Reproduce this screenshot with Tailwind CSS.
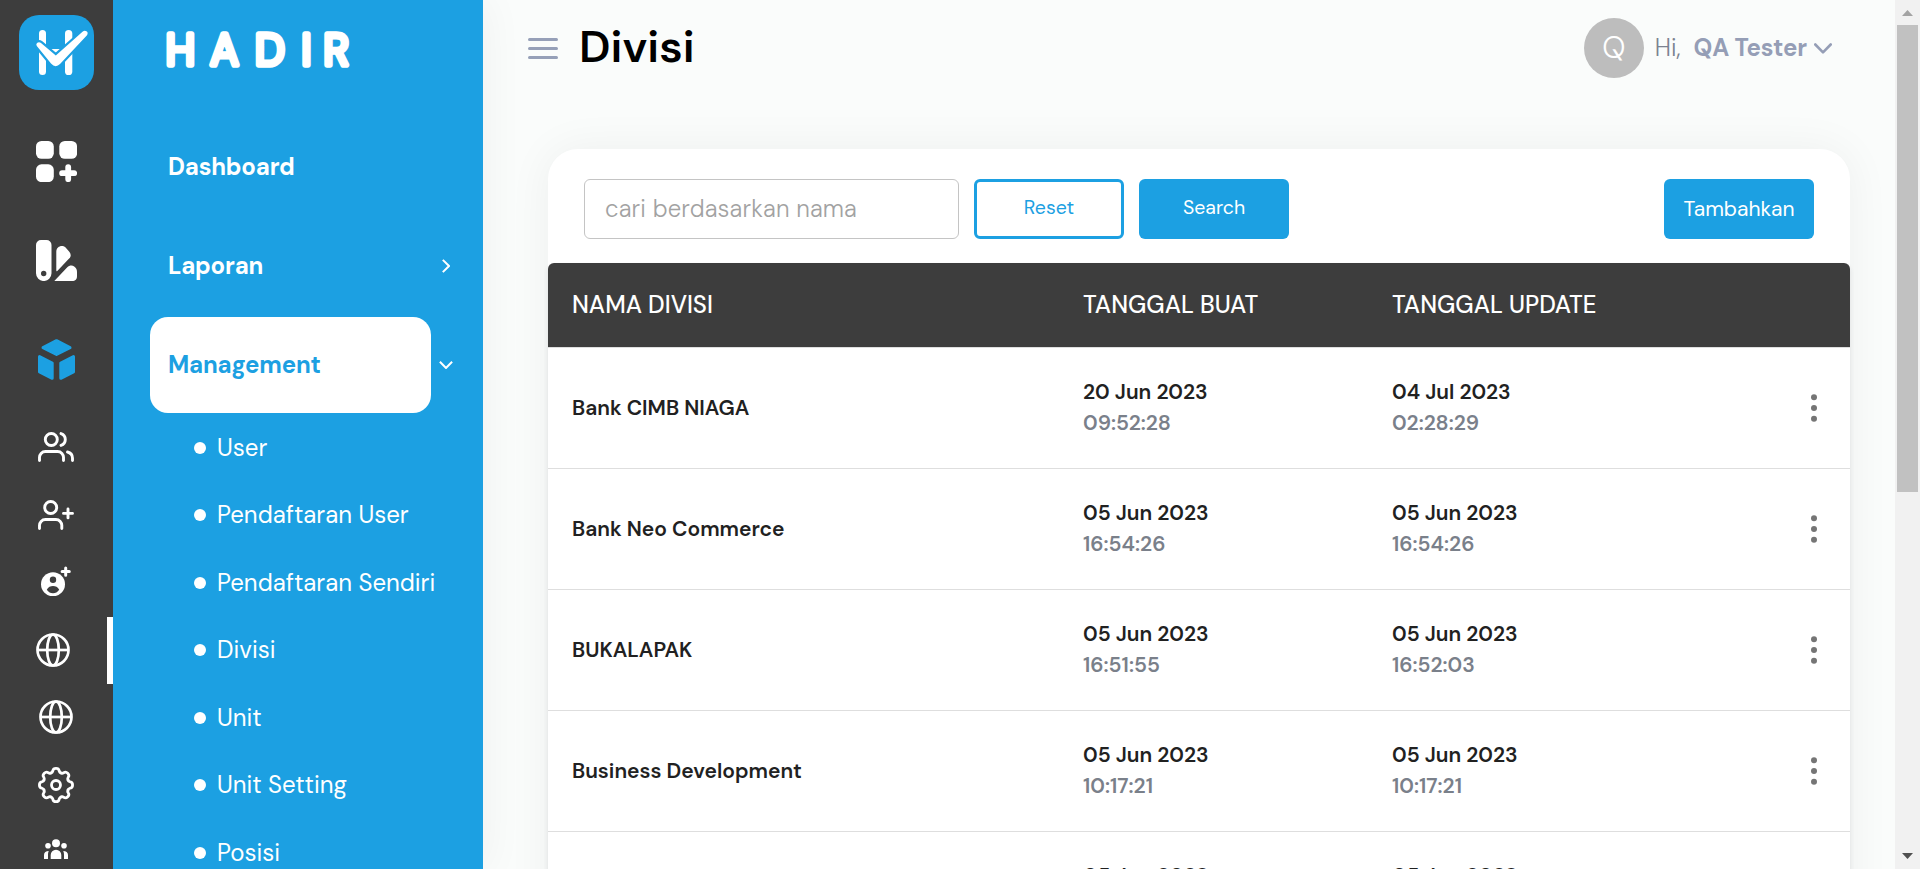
<!DOCTYPE html>
<html lang="id">
<head>
<meta charset="utf-8">
<title>Divisi</title>
<script src="https://cdn.jsdelivr.net/npm/@tailwindcss/browser@4"></script>
</head>
<body class="flex h-[869px] w-[1920px] overflow-hidden bg-[#fafcfb] font-['DM_Sans','Inter',sans-serif] text-2xl text-[#212121]">

<!-- Icon rail -->
<nav class="relative z-20 flex w-[113px] shrink-0 flex-col items-center bg-[#3d3d3d] pt-[15px] text-white">
  <svg class="size-[75px] shrink-0" viewBox="0 0 75 75">
    <rect width="75" height="75" rx="20" fill="#1ca0e2"/>
    <g fill="#fff"><rect x="20" y="15" width="7" height="45" rx="3.5"/><rect x="46" y="15" width="7.3" height="45" rx="3.6"/><rect x="25" y="34" width="23" height="6"/></g>
    <path d="M17.8 31L32 48.5Q36.5 53.5 41 49L68 20.3Q69.5 17.5 67.5 16.3Q65.5 15 63.5 16.8L36.8 40.5L22 28Q20 26.5 18 28Q16.7 29.5 17.8 31Z" fill="#fff" stroke="#1ca0e2" stroke-width="4.4" paint-order="stroke"/>
  </svg>
  <div class="mt-[22px] flex flex-col items-center">
    <div class="flex h-[99px] items-center">
      <svg class="size-[41px]" viewBox="0 0 41 41" fill="currentColor"><rect width="17.8" height="17.8" rx="5.5"/><rect x="23.3" width="17.8" height="17.8" rx="5.5"/><rect y="23.3" width="17.8" height="17.8" rx="5.5"/><path d="M32.2 26.1v12.1M26.1 32.2h12.1" stroke="currentColor" stroke-width="5.8" stroke-linecap="round"/></svg>
    </div>
    <div class="flex h-[99px] items-center">
      <svg class="size-[41px]" viewBox="0 0 41 41" fill="currentColor"><path fill-rule="evenodd" d="M5 0h5.5a5 5 0 0 1 5 5v28.3a7.75 7.75 0 0 1-15.5 0V5a5 5 0 0 1 5-5zM7.7 30.8a2.7 2.7 0 1 0 0 5.4 2.7 2.7 0 0 0 0-5.4z"/><path d="M20.3 11.8C20.3 6 27 4.3 30 8l3.3 3.7c2 2.4 1.8 5-.2 6.9L21.3 31q-1 .6-1-.5z"/><path d="M18.3 41L31.3 27.2c1.8-1.8 4.8-2.2 6.9-.8C40.4 27.8 41 30 41 32v4c0 3.5-1.5 5-5 5z"/></svg>
    </div>
    <div class="flex h-[99px] items-center">
      <svg class="h-[41px] w-[37px] text-[#1ca0e2]" viewBox="0 0 37 41" fill="currentColor" stroke="currentColor" stroke-width="3" stroke-linejoin="round"><path d="M18.500 1.700L32 8.700 18.500 15.500 5 8.700zM1.500 17.500l12.700 6.500v15.300L1.500 33zM35.500 17.500L22.800 24v15.300L35.500 33z"/></svg>
    </div>
  </div>
  <div class="flex w-full flex-col items-center pt-[5px]">
    <div class="flex h-[67.5px] shrink-0 items-center pr-0.5 pb-0.5">
      <svg class="h-[30px] w-9" viewBox="0 0 36 30" fill="none" stroke="currentColor" stroke-width="2.900" stroke-linecap="round"><circle cx="13.300" cy="7.500" r="6"/><path d="M1.500 28.500V26a6 6 0 0 1 6-6.500h12a6 6 0 0 1 6 6.500v2.500M23 1.600a6.200 6.200 0 0 1 0 11.800M29.500 20a6.500 6.500 0 0 1 5 6.200v2.300"/></svg>
    </div>
    <div class="flex h-[67.5px] shrink-0 items-center pr-0.5">
      <svg class="h-[30px] w-9" viewBox="0 0 36 30" fill="none" stroke="currentColor" stroke-width="2.900" stroke-linecap="round"><circle cx="12.700" cy="7.500" r="6"/><path d="M1.500 28.500V26a6 6 0 0 1 6-6.500h10.300a6 6 0 0 1 6 6.500v2.500M30 8.900v9M25.500 13.400h9"/></svg>
    </div>
    <div class="flex h-[67.5px] shrink-0 items-center pr-0.5 pb-1">
      <svg class="size-[30px]" viewBox="0 0 30 30"><circle cx="12" cy="18.300" r="12" fill="currentColor"/><circle cx="12" cy="13.700" r="3.200" fill="#3d3d3d"/><path d="M5.800 23.700C7.200 21 9.500 20 12 20s4.800 1 6.200 3.700C16.500 26.200 14.500 27.200 12 27.200s-4.500-1-6.200-3.500z" fill="#3d3d3d"/><path d="M24.700 2v7.200M21.100 5.600h7.200" stroke="currentColor" stroke-width="3" stroke-linecap="round"/></svg>
    </div>
    <div class="flex h-[67.5px] w-full shrink-0 items-center justify-center border-r-[6px] border-white pr-0.5">
      <svg class="size-[34px]" viewBox="0 0 34 34" fill="none" stroke="currentColor" stroke-width="2.700"><circle cx="17" cy="17" r="15.500"/><ellipse cx="17" cy="17" rx="5.800" ry="15.500"/><path d="M2 17h30"/></svg>
    </div>
    <div class="flex h-[67.5px] shrink-0 items-center pr-0.5 pb-px">
      <svg class="size-[34px]" viewBox="0 0 34 34" fill="none" stroke="currentColor" stroke-width="2.700"><circle cx="17" cy="17" r="15.500"/><ellipse cx="17" cy="17" rx="5.800" ry="15.500"/><path d="M2 17h30"/></svg>
    </div>
    <div class="flex h-[67.5px] shrink-0 items-center pr-0.5">
      <svg class="size-9" viewBox="-18 -18 36 36" fill="none" stroke="currentColor" stroke-width="2.800" stroke-linecap="round">
        <defs><path id="tooth" d="M-5-12C-3.200-12.700-3.400-13.600-3.100-14.400C-2.600-17.300 2.600-17.300 3.100-14.400C3.400-13.600 3.200-12.700 5-12"/></defs>
        <circle r="4.500"/><use href="#tooth"/><use href="#tooth" transform="rotate(45)"/><use href="#tooth" transform="rotate(90)"/><use href="#tooth" transform="rotate(135)"/><use href="#tooth" transform="rotate(180)"/><use href="#tooth" transform="rotate(225)"/><use href="#tooth" transform="rotate(270)"/><use href="#tooth" transform="rotate(315)"/>
      </svg>
    </div>
    <div class="flex h-[67.5px] shrink-0 items-center pr-0.5 pb-[7px]">
      <svg class="h-5 w-6" viewBox="0 0 24 20" fill="currentColor"><circle cx="12" cy="4.300" r="4"/><circle cx="4" cy="6.700" r="2.800"/><circle cx="20" cy="6.700" r="2.800"/><path d="M6.700 20v-4a5.300 5.300 0 0 1 10.600 0v4zM0 20v-4c0-2.600 2-4 4.800-4-.700 1.200-.8 2.500-.8 4v4zM24 20v-4c0-2.600-2-4-4.800-4 .7 1.200.8 2.500.8 4v4z"/></svg>
    </div>
  </div>
</nav>

<!-- Menu panel -->
<aside class="relative z-10 flex w-[370px] shrink-0 flex-col bg-[#1ca0e2] text-white shadow-[0_0_42px_rgba(0,0,0,0.055)]">
  <svg class="h-[119px] w-full shrink-0" viewBox="113 0 370 119">
    <text transform="scale(.96 1)" y="64.800" x="172.600 219 265.600 314.200 337" font-family="DM Sans, Inter, sans-serif" font-size="45" font-weight="300" fill="#fff" stroke="#fff" stroke-width="5.600" stroke-linejoin="round">HADIR</text>
  </svg>
  <div class="flex flex-col gap-[3px] pl-[37px] font-bold">
    <a class="flex h-24 w-[281px] items-center pl-[18px] tracking-[-0.2px]">Dashboard</a>
    <div class="flex items-center">
      <a class="flex h-24 w-[281px] items-center pl-[18px] tracking-[-0.2px]">Laporan</a>
      <svg class="ml-[11px] h-[14px] w-2" viewBox="0 0 8 14" fill="none" stroke="currentColor" stroke-width="2"><path d="M.8.900L7 7 .8 13.100"/></svg>
    </div>
    <div class="flex items-center">
      <a class="flex h-24 w-[281px] items-center rounded-[18px] bg-white pl-[18px] tracking-[-0.2px] text-[#1ca0e2]">Management</a>
      <svg class="ml-2 h-2 w-[14px]" viewBox="0 0 14 8" fill="none" stroke="currentColor" stroke-width="2"><path d="M.9.800L7 7 13.100.8"/></svg>
    </div>
  </div>
  <ul class="flex flex-col pt-[1px] pl-[81px]">
    <li class="flex h-[67.5px] shrink-0 items-center gap-[11px]"><span class="size-3 rounded-full bg-white"></span><span class="pt-px">User</span></li>
    <li class="flex h-[67.5px] shrink-0 items-center gap-[11px]"><span class="size-3 rounded-full bg-white"></span><span>Pendaftaran User</span></li>
    <li class="flex h-[67.5px] shrink-0 items-center gap-[11px]"><span class="size-3 rounded-full bg-white"></span><span class="pt-px">Pendaftaran Sendiri</span></li>
    <li class="flex h-[67.5px] shrink-0 items-center gap-[11px]"><span class="size-3 rounded-full bg-white"></span><span>Divisi</span></li>
    <li class="flex h-[67.5px] shrink-0 items-center gap-[11px]"><span class="size-3 rounded-full bg-white"></span><span class="pt-px">Unit</span></li>
    <li class="flex h-[67.5px] shrink-0 items-center gap-[11px]"><span class="size-3 rounded-full bg-white"></span><span>Unit Setting</span></li>
    <li class="flex h-[67.5px] shrink-0 items-center gap-[11px]"><span class="size-3 rounded-full bg-white"></span><span class="pt-px">Posisi</span></li>
  </ul>
</aside>

<!-- Content -->
<main class="flex min-w-0 flex-1 flex-col overflow-hidden">
  <header class="flex h-24 shrink-0 items-center pr-[63px] pl-[45px]">
    <div class="flex h-[21px] w-[30px] flex-col justify-between"><span class="h-[3px] rounded-xs bg-[#96a0b8]"></span><span class="h-[3px] rounded-xs bg-[#96a0b8]"></span><span class="h-[3px] rounded-xs bg-[#96a0b8]"></span></div>
    <h1 class="ml-[21px] pb-[3px] text-[45px] leading-none font-semibold text-black">Divisi</h1>
    <div class="ml-auto flex items-center text-[#959eb6]">
      <div class="flex size-[60px] items-center justify-center rounded-full bg-[#bdbdbd] text-[30px] font-light text-white">Q</div>
      <span class="ml-[11px] font-light text-[#7b8290]">Hi,</span>
      <span class="ml-[13px] font-bold tracking-[-0.15px]">QA Tester</span>
      <svg class="ml-[7px] h-[11px] w-[18px]" viewBox="0 0 18 11" fill="none" stroke="currentColor" stroke-width="2.600" stroke-linecap="round" stroke-linejoin="round"><path d="M1.300 1.500L9 9.300l7.700-7.800"/></svg>
    </div>
  </header>

  <section class="mt-[53px] mr-[45px] ml-[65px] flex flex-1 flex-col rounded-t-[30px] bg-white shadow-[0_0_45px_rgba(0,0,0,0.055)]">
    <div class="flex h-[114px] shrink-0 items-start pt-[30px] pr-9 pl-9">
      <div class="flex h-[60px] w-[375px] items-center rounded-md border border-[#c4c4c4] pl-5 font-light tracking-[0.14px] text-[#a2a2a2]">cari berdasarkan nama</div>
      <button class="ml-[15px] h-[60px] w-[150px] rounded-md border-3 border-[#1ca0e2] pb-[3px] text-[19.5px] text-[#1ca0e2]">Reset</button>
      <button class="ml-[15px] h-[60px] w-[150px] rounded-md bg-[#1ca0e2] pb-[3px] text-[19.5px] text-white">Search</button>
      <button class="ml-auto h-[60px] w-[150px] rounded-md bg-[#1ca0e2] text-[21px] text-white">Tambahkan</button>
    </div>

    <div class="flex flex-1 flex-col rounded-t-md bg-white shadow-[0_3px_5px_rgba(40,40,60,0.11)]">
      <div class="grid h-[84px] shrink-0 grid-cols-[511px_309px_1fr] items-center rounded-t-md bg-[#3d3d3d] pl-6 font-medium text-white"><span>NAMA DIVISI</span><span>TANGGAL BUAT</span><span>TANGGAL UPDATE</span></div>
      <div id="rows" class="text-[21px] font-semibold"></div>
    </div>
  </section>
</main>

<!-- Scrollbar -->
<div class="flex w-[25px] shrink-0 flex-col items-center bg-[#f1f1f1]">
  <svg class="h-[25px] w-[11px]" viewBox="0 0 11 25" fill="#a3a3a3"><path d="M5.500 10l5.500 6H0z"/></svg>
  <div class="h-[467px] w-[21px] bg-[#c1c1c1]"></div>
  <svg class="mt-auto h-[25px] w-[11px]" viewBox="0 0 11 25" fill="#505050"><path d="M5.500 15L0 9h11z"/></svg>
</div>

<script>
const rows = [
  ['Bank CIMB NIAGA', '20 Jun 2023', '09:52:28', '04 Jul 2023', '02:28:29'],
  ['Bank Neo Commerce', '05 Jun 2023', '16:54:26', '05 Jun 2023', '16:54:26'],
  ['BUKALAPAK', '05 Jun 2023', '16:51:55', '05 Jun 2023', '16:52:03'],
  ['Business Development', '05 Jun 2023', '10:17:21', '05 Jun 2023', '10:17:21'],
  ['', '05 Jun 2023', '', '05 Jun 2023', ''],
];
const cell = (d, t) => `<div class="leading-[31px]"><p>${d}</p><p class="h-[31px] text-[#7a808a]">${t}</p></div>`;
document.getElementById('rows').innerHTML = rows.map(([n, d1, t1, d2, t2]) => `
  <div class="grid h-[121px] grid-cols-[511px_309px_1fr_6px] items-center border-t border-[#dedede] pr-[33px] pl-6">
    <span>${n}</span>${cell(d1, t1)}${cell(d2, t2)}
    <svg class="h-[28px] w-[6px]" viewBox="0 0 6 28" fill="#757575"><circle cx="3" cy="3.300" r="3"/><circle cx="3" cy="14" r="3"/><circle cx="3" cy="24.700" r="3"/></svg>
  </div>`).join('');
</script>
</body>
</html>
